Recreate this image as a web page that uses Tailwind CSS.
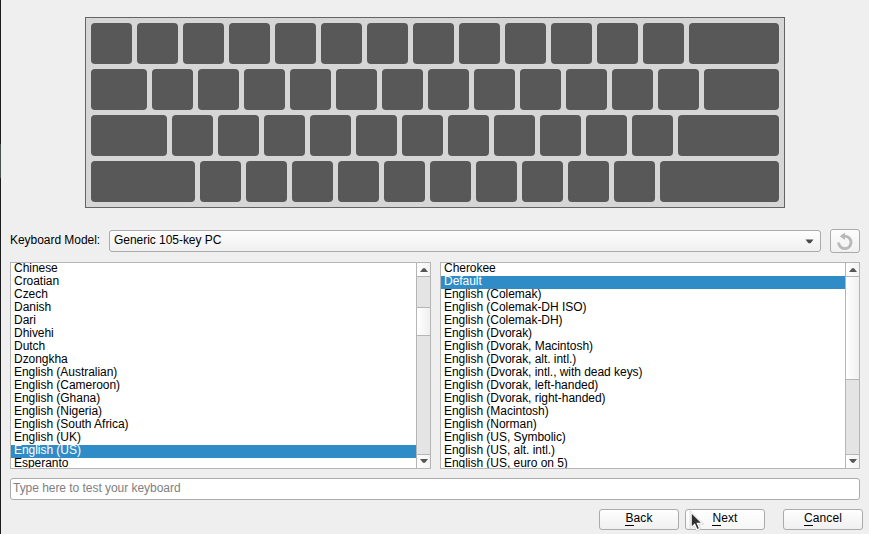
<!DOCTYPE html>
<html lang="en">
<head>
<meta charset="utf-8">
<title>Keyboard</title>
<script src="https://cdn.jsdelivr.net/npm/@tailwindcss/browser@4"></script>
</head>
<body class="w-[869px] h-[534px] overflow-hidden bg-[#efefef] font-['Liberation_Sans',sans-serif] text-[12px] leading-[13px] text-black flex">
<!-- window edge -->
<div class="w-px h-full shrink-0 flex flex-col bg-[#1b1c1d]"><div class="mt-[144px] h-[34px] bg-[#4a4f50]"></div></div>
<main class="relative w-[868px] flex flex-col pl-[9px] pt-[17px]">
  <!-- keyboard preview -->
  <div id="keyboard" class="ml-[75px] w-[700px] h-[191px] shrink-0 border border-[#646464] bg-[#d6d6d6] p-[5px] flex flex-col gap-[5px]"></div>

  <div class="mt-[21px] h-[24px] w-[850px] shrink-0 flex items-center">
    <label class="w-[99px] -mt-[2px] tracking-[-0.04px] whitespace-nowrap">Keyboard Model:</label>
    <div class="w-[712px] h-[22px] border border-[#ababab] rounded-[3px] bg-linear-to-b from-[#fdfdfd] to-[#f0f0f0] flex items-center justify-between pl-[4px] pr-[6px]">
      <span class="-mt-[2px] tracking-[-0.04px]">Generic 105-key PC</span>
      <svg class="w-[9px] h-[5px]" viewBox="0 0 9 5"><path d="M0.5 0.500h8L5.500 4.300h-2z" fill="#4a4a4a"/></svg>
    </div>
    <button class="ml-[9px] w-[30px] h-[24px] border border-[#ababab] rounded-[3px] bg-linear-to-b from-[#fdfdfd] to-[#f0f0f0] flex items-center justify-center">
      <svg class="w-[18px] h-[18px]" viewBox="0 0 18 18"><path d="M8.500 4.200h.7a6.200 6.200 0 1 1-6.600 6.200" fill="none" stroke="#b9b9b9" stroke-width="2.800"/><path d="M3.700 4.300 9 .500V8z" fill="#b9b9b9"/></svg>
    </button>
  </div>

  <div class="mt-[9px] h-[207px] shrink-0 flex gap-[9px]">
    <div class="w-[421px] h-[207px] border border-[#b5b5b5] bg-white flex overflow-hidden">
      <div id="layouts" class="w-[405px] shrink-0 overflow-hidden"></div>
      <div class="w-[14px] shrink-0 border-l border-[#b5b5b5] bg-[#e4e4e4] flex flex-col">
        <div class="h-[14px] border-b border-[#b5b5b5] bg-linear-to-r from-white to-[#f3f3f3] flex items-center justify-center"><svg class="w-[8px] h-[4px]" viewBox="0 0 8 4"><path d="M0 4h8L5 .3H3z" fill="#555"/></svg></div>
        <div class="mt-[30px] h-[29px] border-y border-[#b5b5b5] bg-linear-to-r from-white to-[#f0f0f0]"></div>
        <div class="mt-auto h-[14px] border-t border-[#b5b5b5] bg-linear-to-r from-white to-[#f3f3f3] flex items-center justify-center"><svg class="-mt-px w-[8px] h-[4px]" viewBox="0 0 8 4"><path d="M0 0h8L5 3.700H3z" fill="#555"/></svg></div>
      </div>
    </div>
    <div class="w-[420px] h-[207px] border border-[#b5b5b5] bg-white flex overflow-hidden">
      <div id="variants" class="w-[404px] shrink-0 overflow-hidden"></div>
      <div class="w-[14px] shrink-0 border-l border-[#b5b5b5] bg-[#e4e4e4] flex flex-col">
        <div class="h-[14px] border-b border-[#b5b5b5] bg-linear-to-r from-white to-[#f3f3f3] flex items-center justify-center"><svg class="w-[8px] h-[4px]" viewBox="0 0 8 4"><path d="M0 4h8L5 .3H3z" fill="#555"/></svg></div>
        <div class="h-[103px] border-b border-[#b5b5b5] bg-linear-to-r from-white to-[#f0f0f0]"></div>
        <div class="mt-auto h-[14px] border-t border-[#b5b5b5] bg-linear-to-r from-white to-[#f3f3f3] flex items-center justify-center"><svg class="-mt-px w-[8px] h-[4px]" viewBox="0 0 8 4"><path d="M0 0h8L5 3.700H3z" fill="#555"/></svg></div>
      </div>
    </div>
  </div>

  <div class="mt-[9px] w-[850px] h-[22px] shrink-0 border border-[#ababab] rounded-[3px] bg-white flex items-center pl-[2px] text-[#808080]"><span class="-mt-[2px] tracking-[-0.04px]">Type here to test your keyboard</span></div>

  <div class="mt-[9px] h-[21px] shrink-0 flex pl-[589px]">
    <button class="w-[80px] border border-[#ababab] rounded-[3px] bg-linear-to-b from-[#fefefe] to-[#f0f0f0] pb-[2px] tracking-[0.1px]"><span class="border-b border-black">B</span>ack</button>
    <button class="ml-[6px] w-[80px] border border-[#ababab] rounded-[3px] bg-linear-to-b from-white to-[#f6f6f6] pb-[2px] tracking-[0.1px]"><span class="border-b border-black">N</span>ext</button>
    <button class="ml-[18px] w-[80px] border border-[#ababab] rounded-[3px] bg-linear-to-b from-[#fefefe] to-[#f0f0f0] pb-[2px] tracking-[0.1px]"><span class="border-b border-black">C</span>ancel</button>
  </div>
  <!-- mouse pointer -->
  <svg class="absolute left-[688px] top-[510px] w-[15px] h-[22px]" viewBox="0 0 15 22"><path d="M2 2v16l3.600-3.300 2.400 5.300 2.900-1.300-2.300-5.200h5z" fill="#2e3032" stroke="#fff" stroke-width="1.600"/><path d="M1.200.7v18.500l4-3.300 2.300 5.200 4.400-2-2.200-4.900h5z" fill="none" stroke="#b8b8b8" stroke-width=".5"/></svg>
</main>
<script>
const keyRows = [[...Array(13).fill(41), 90], [56, ...Array(12).fill(41), 75], [76, ...Array(11).fill(41), 101], [104, ...Array(10).fill(41), 119]];
document.getElementById('keyboard').innerHTML = keyRows.map(r => '<div class="flex gap-[5px] h-[41px]">' + r.map(w => `<div class="bg-[#585858] rounded-[4px] shrink-0" style="width:${w}px"></div>`).join('') + '</div>').join('');
function fill(id, items, selected) {
  document.getElementById(id).innerHTML = items.map(t => `<div class="${t === selected ? 'bg-[#308cc6] text-white' : ''} h-[13px] leading-[11px] pl-[3px] tracking-[-0.04px] whitespace-nowrap">${t}</div>`).join('');
}
fill('layouts', ['Chinese','Croatian','Czech','Danish','Dari','Dhivehi','Dutch','Dzongkha','English (Australian)','English (Cameroon)','English (Ghana)','English (Nigeria)','English (South Africa)','English (UK)','English (US)','Esperanto'], 'English (US)');
fill('variants', ['Cherokee','Default','English (Colemak)','English (Colemak-DH ISO)','English (Colemak-DH)','English (Dvorak)','English (Dvorak, Macintosh)','English (Dvorak, alt. intl.)','English (Dvorak, intl., with dead keys)','English (Dvorak, left-handed)','English (Dvorak, right-handed)','English (Macintosh)','English (Norman)','English (US, Symbolic)','English (US, alt. intl.)','English (US, euro on 5)'], 'Default');
</script>
</body>
</html>
